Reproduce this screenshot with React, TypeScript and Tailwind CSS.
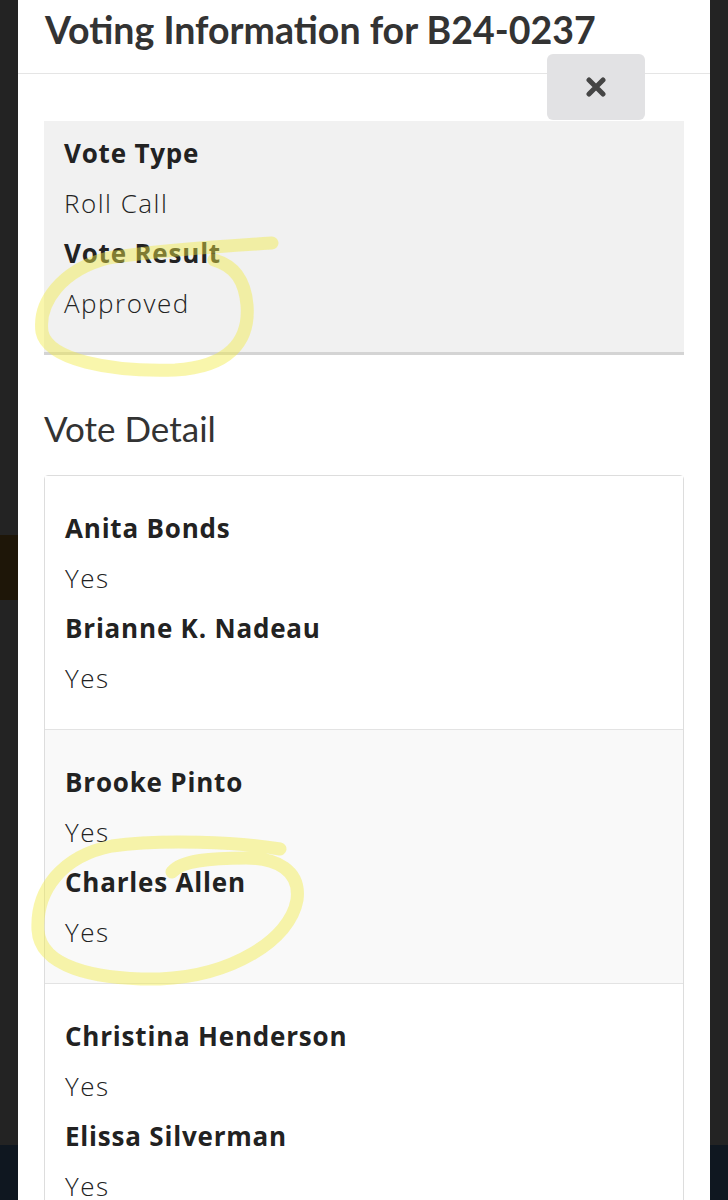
import React from "react"

const councilGroups = [
  [
    { name: "Anita Bonds", vote: "Yes" },
    { name: "Brianne K. Nadeau", vote: "Yes" },
  ],
  [
    { name: "Brooke Pinto", vote: "Yes" },
    { name: "Charles Allen", vote: "Yes" },
  ],
  [
    { name: "Christina Henderson", vote: "Yes" },
    { name: "Elissa Silverman", vote: "Yes" },
  ],
]

const bodyFont = "font-['Open_Sans',_'Liberation_Sans',_sans-serif]"
const headFont = "font-['Lato',_'Liberation_Sans',_sans-serif]"

function CloseIcon() {
  return (
    <svg width="20" height="20" viewBox="0 0 20 20" aria-hidden="true">
      <path d="M3 3 L17 17 M17 3 L3 17" stroke="#454545" strokeWidth="5" strokeLinecap="round" />
    </svg>
  )
}

// hand-drawn highlighter marks that sit on top of the modal
function Highlights() {
  return (
    <svg
      className="pointer-events-none absolute inset-0"
      width="728"
      height="1200"
      viewBox="0 0 728 1200"
      fill="none"
    >
      <g stroke="rgba(242,236,70,0.45)" strokeWidth="13" strokeLinecap="round" strokeLinejoin="round">
        <path d="M272 243 C240 245 160 250 108 258 C62 270 38 302 42 332 C48 360 110 372 175 370 C228 367 250 342 247 305 C245 282 236 266 214 260" />
        <path d="M280 849 C240 842 160 839 112 846 C62 856 36 890 38 930 C40 966 92 980 160 979 C232 976 290 940 297 900 C301 870 276 858 246 858 C212 858 182 860 172 872" />
      </g>
    </svg>
  )
}

export default function App() {
  return (
    <div className="relative flex h-[1200px] overflow-hidden bg-[#232323]">
      <div className="flex w-[18px] flex-col">
        <div className="h-[535px]" />
        <div className="h-[65px] bg-[#1e1608]" />
        <div className="h-[545px]" />
        <div className="flex-1 bg-[#0f1720]" />
      </div>

      <div className="relative flex-1 bg-white">
        <div className="h-[74px] border-b border-[#e5e5e5] px-[27px] pt-[8px]">
          <h1 className={`${headFont} text-[37.5px] font-bold leading-[44px] text-[#333]`}>
            Voting Information for B24-0237
          </h1>
        </div>

        <button className="absolute left-[529px] top-[54px] flex h-[66px] w-[98px] items-center justify-center rounded-[6px] bg-[#e2e2e4]">
          <CloseIcon />
        </button>

        <div className="px-[26px] pt-[47px]">
          <dl className={`${bodyFont} border-b-[3px] border-[#d4d4d4] bg-[#f1f1f1] pb-[24px] pl-[20px] pt-[7px] text-[26px] leading-[50px] text-[#222]`}>
            <dt className="font-bold tracking-[0.8px]">Vote Type</dt>
            <dd className="font-light tracking-[1.5px]">Roll Call</dd>
            <dt className="font-bold tracking-[0.8px]">Vote Result</dt>
            <dd className="font-light tracking-[1.5px]">Approved</dd>
          </dl>

          <h2 className={`${headFont} mt-[53px] text-[35px] font-normal leading-[40px] text-[#333]`}>
            Vote Detail
          </h2>

          <div className={`${bodyFont} mt-[27px] rounded-[4px] border border-[#dddddd] text-[26px] leading-[50px] text-[#222]`}>
            {councilGroups.map((group, i) => (
              <div
                key={i}
                className={`border-b border-[#e3e3e3] px-[20px] pb-[26px] pt-[27px] ${i % 2 === 1 ? "bg-[#f9f9f9]" : "bg-white"}`}
              >
                {group.map((m) => (
                  <div key={m.name}>
                    <div className="font-bold tracking-[0.8px]">{m.name}</div>
                    <div className="font-light tracking-[1.5px]">{m.vote}</div>
                  </div>
                ))}
              </div>
            ))}
          </div>
        </div>
      </div>

      <div className="flex w-[18px] flex-col">
        <div className="h-[1145px]" />
        <div className="flex-1 bg-[#0f1720]" />
      </div>

      <Highlights />
    </div>
  )
}
